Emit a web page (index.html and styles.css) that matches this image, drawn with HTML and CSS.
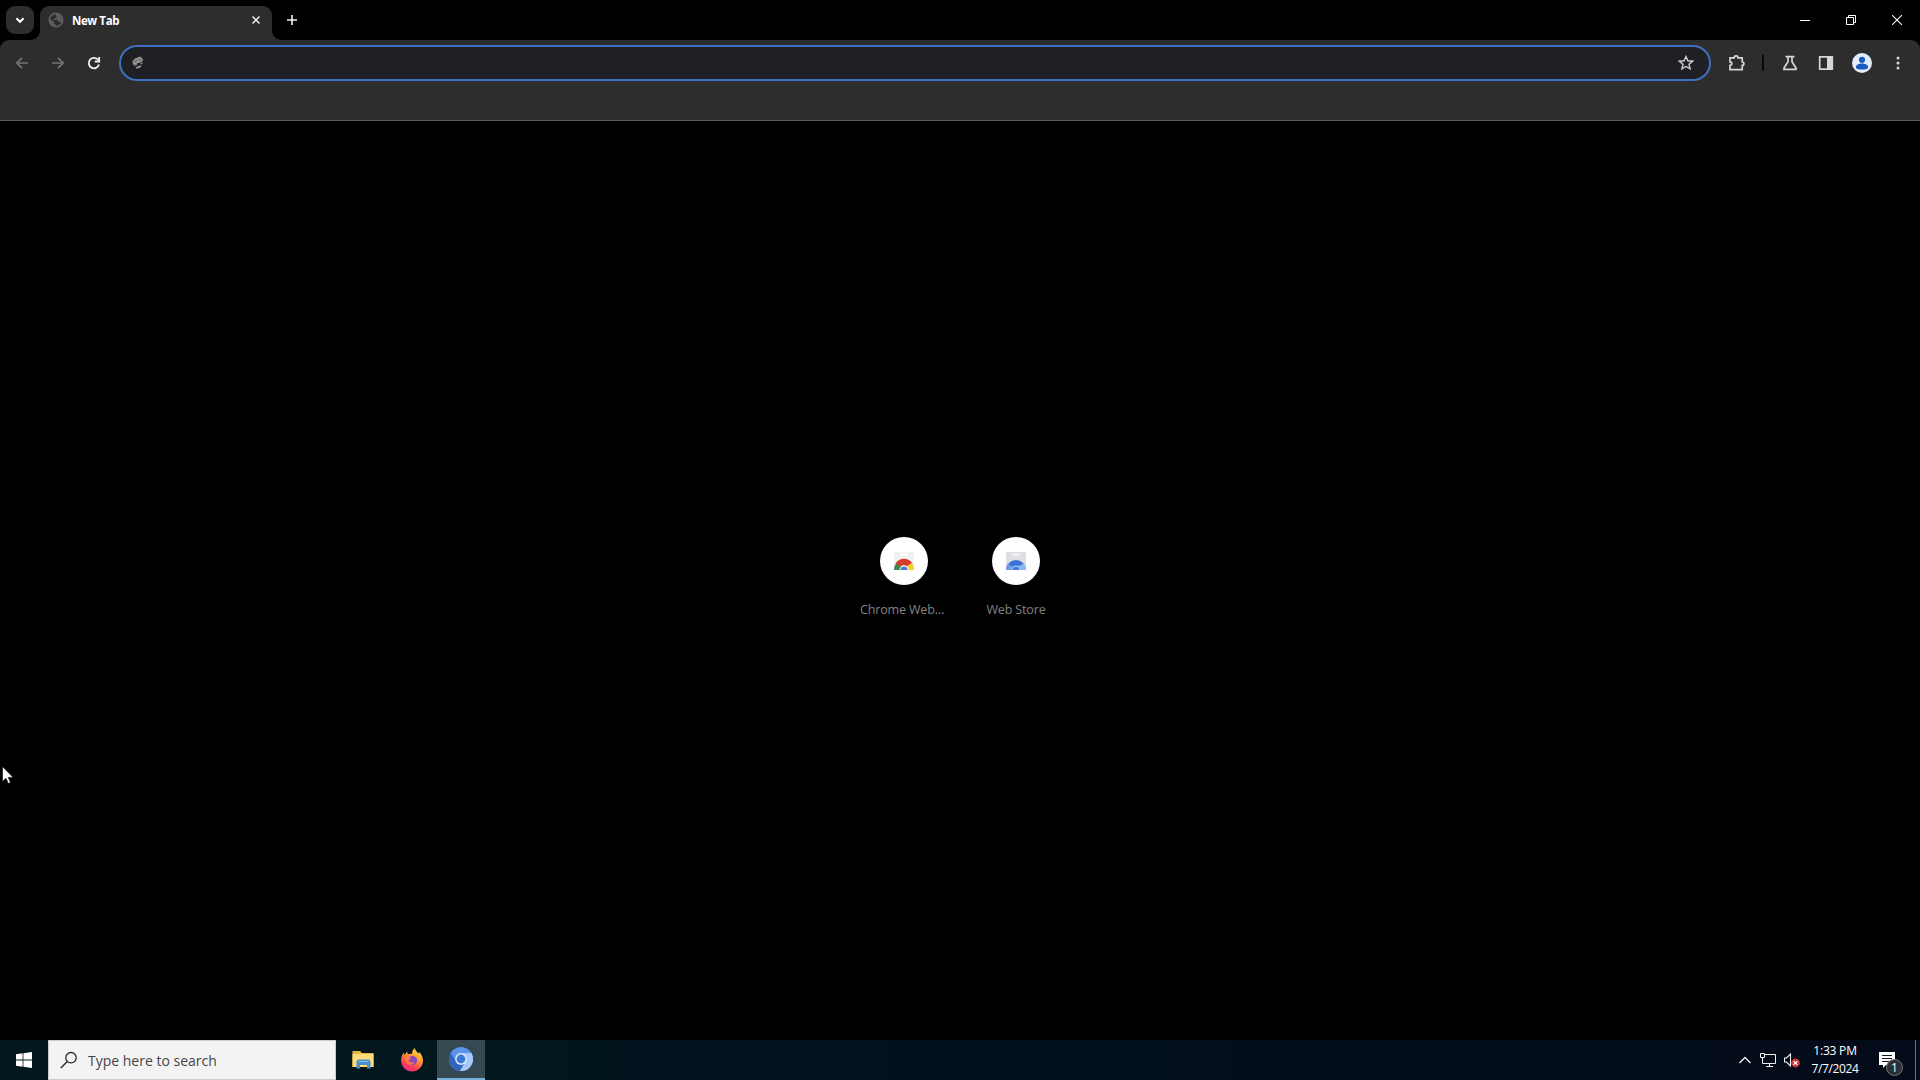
FILE: index.html
```html
<!DOCTYPE html>
<html lang="en">
<head>
  <meta charset="UTF-8" />
  <title>New Tab</title>
  <link rel="stylesheet" href="styles.css">
</head>
<body>
  <header class="tabstrip">
    <button class="tab-search" aria-label="Search tabs">
      <svg width="12" height="12" viewBox="0 0 12 12"><path d="M2.4 4.2 6 7.8l3.6-3.6" fill="none" stroke="#fff" stroke-width="2"/></svg>
    </button>
    <div class="tab">
      <svg class="globe" width="16" height="16" viewBox="0 0 16 16">
        <circle cx="8" cy="8" r="6.8" fill="none" stroke="#626262" stroke-width="1.4"/>
        <path d="M1.5 6.5 6 10v1.5l1.700 1V15C4 15 1 12 1.500 6.500zM8.500 1.500 7.500 4l1.500 1.500-2.500 1-1 1.500h4l1.500 2 2.500.5C15.500 6 13 1.500 8.500 1.500z" fill="#5c5c5c"/>
      </svg>
      <span class="tab-title">New Tab</span>
      <button class="tab-close" aria-label="Close tab">
        <svg width="10" height="10" viewBox="0 0 10 10"><path d="M1.5 1.5l7 7M8.5 1.5l-7 7" stroke="#f2f2f2" stroke-width="1.5"/></svg>
      </button>
    </div>
    <button class="new-tab" aria-label="New tab">
      <svg width="12" height="12" viewBox="0 0 12 12"><path d="M6 1v10M1 6h10" stroke="#f2f2f2" stroke-width="1.6"/></svg>
    </button>
    <div class="window-controls">
      <button aria-label="Minimize"><svg width="10" height="10" viewBox="0 0 10 10"><path d="M0 5.5h10" stroke="#fff"/></svg></button>
      <button aria-label="Restore"><svg width="10" height="10" viewBox="0 0 10 10"><path d="M.5 2.5h7v7h-7zM2.5 2.5v-2h7v7h-2" fill="none" stroke="#fff"/></svg></button>
      <button aria-label="Close"><svg width="10" height="10" viewBox="0 0 10 10"><path d="M0 0l10 10M10 0L0 10" stroke="#fff" stroke-width="1.1"/></svg></button>
    </div>
  </header>

  <nav class="toolbar">
    <div class="toolbar-row">
      <button class="tool dim" aria-label="Back">
        <svg width="16" height="16" viewBox="0 0 16 16"><path d="M14 8H3M8 2.8 2.8 8 8 13.2"/></svg>
      </button>
      <button class="tool dim" aria-label="Forward">
        <svg width="16" height="16" viewBox="0 0 16 16"><path d="M2 8h11M8 2.8 13.2 8 8 13.2"/></svg>
      </button>
      <button class="tool bright" aria-label="Reload">
        <svg width="16" height="16" viewBox="0 0 16 16"><path d="M13 9.5A5.2 5.2 0 1 1 12.2 5"/><path d="M13.2 2v4.5H8.8"/></svg>
      </button>
      <div class="omnibox">
        <svg class="site-icon" width="16" height="16" viewBox="0 0 16 16">
          <path d="M2.5 6 5 3.5l5-2 2.500 2 .5 2.500-3 1.500-4 1.500-3 1z" fill="#96948e"/>
          <path d="M4.500 6.500l3-1.200M9 4.500l2 .5" stroke="#4c4c50"/>
          <path d="M4 10.200l3-1M10.500 8.700l2-.7" stroke="#84827c" stroke-width="1.500"/>
          <path d="M6 13l5-1.800" stroke="#a09e98" stroke-width="1.800"/>
        </svg>
        <svg class="star" width="16" height="16" viewBox="0 0 16 16"><path d="M8 1.5l1.9 4.3 4.7.4-3.6 3.1 1.1 4.6L8 11.5l-4.100 2.400L5 9.300 1.400 6.200l4.700-.4z" fill="none" stroke="#d0d0d4" stroke-width="1.4"/></svg>
      </div>
      <button class="tool extensions" aria-label="Extensions">
        <svg width="18" height="18" viewBox="0 0 18 18"><path d="M2 3.8h4.2a1.9 1.9 0 0 1 3.8 0h4.2V8a1.7 1.7 0 0 1 0 3.4v4.2H2v-4.2a1.8 1.8 0 0 0 0-3.6z"/></svg>
      </button>
      <span class="divider"></span>
      <button class="tool" aria-label="Experiments">
        <svg width="16" height="16" viewBox="0 0 16 16"><path d="M3.5 1.7h9M6 1.7v5L2 13v1.3h12V13L10 6.7v-5"/></svg>
      </button>
      <button class="tool" aria-label="Side panel">
        <svg width="16" height="16" viewBox="0 0 16 16"><path d="M1.7 1.8h12.6v12.4H1.7z"/><path d="M9 1.5h5.5v13H9z" fill="#d6d6d6" stroke="none"/></svg>
      </button>
      <button class="tool" aria-label="Profile">
        <svg width="20" height="20" viewBox="0 0 20 20"><g stroke="none"><circle cx="10" cy="10" r="10" fill="#e2ecfb"/><circle cx="10" cy="6.8" r="3.1" fill="#1a5cc4"/><path d="M4 15v-1.2c0-2.3 3.5-3.3 6-3.3s6 1 6 3.3V15c-1 1-3 1.6-6 1.6S5 16 4 15z" fill="#1a5cc4"/></g></svg>
      </button>
      <button class="tool" aria-label="Menu">
        <svg width="16" height="16" viewBox="0 0 16 16"><g fill="#d6d6d6" stroke="none"><circle cx="8" cy="2.9" r="1.5"/><circle cx="8" cy="8" r="1.5"/><circle cx="8" cy="13.1" r="1.5"/></g></svg>
      </button>
    </div>
  </nav>

  <main>
    <a class="shortcut">
      <span class="shortcut-icon">
        <svg width="20" height="20" viewBox="0 0 20 20">
          <path d="M0 1h20v17H0z" fill="#f1f1f1"/>
          <path d="M6 3.5h8" stroke="#fff" stroke-width="2"/>
          <path d="M0 19a10 10 0 0 1 3-7.5l5 4.5-1 3z" fill="#3c8b48"/>
          <path d="M1.5 12.5a10 10 0 0 1 17 0l-6 3a4 4 0 0 0-5.5 0z" fill="#d83b2d"/>
          <path d="M17.8 12a10 10 0 0 1 2.2 7h-7l-.6-3.5z" fill="#f6cf31"/>
          <path d="M5.5 19a4.5 4.5 0 0 1 9 0z" fill="#fff"/>
          <path d="M6.5 19a3.5 3.5 0 0 1 7 0z" fill="#3d7de0"/>
        </svg>
      </span>
      <span class="shortcut-label truncated">Chrome Web...</span>
    </a>
    <a class="shortcut">
      <span class="shortcut-icon">
        <svg width="20" height="20" viewBox="0 0 20 20">
          <path d="M0 1h20v17.5H0z" fill="#dedfe4"/>
          <path d="M6 3.5h8" stroke="#f5f5f5" stroke-width="2"/>
          <path d="M0 19a10 10 0 0 1 20 0z" fill="#3f73d1"/>
          <path d="M0 19a10 10 0 0 1 2-6.5L7 16l-1 3z" fill="#6f9ae6"/>
          <path d="M18 12.5a10 10 0 0 1 2 6.5h-7l-1-3.5z" fill="#8db8f5"/>
          <path d="M5.5 19a4.5 4.5 0 0 1 9 0z" fill="#a9c9f5"/>
          <path d="M6.7 19a3.3 3.3 0 0 1 6.6 0z" fill="#3c7bde"/>
        </svg>
      </span>
      <span class="shortcut-label">Web Store</span>
    </a>
  </main>

  <footer class="taskbar">
    <button class="start" aria-label="Start">
      <svg width="16" height="16" viewBox="0 0 16 16"><path d="M0 2.2l6.6-.9v6.2H0zM7.4 1.2 16 0v7.5H7.4zM0 8.4h6.6v6.3L0 13.8zM7.4 8.4H16V16l-8.6-1.2z" fill="#fff"/></svg>
    </button>
    <div class="search">
      <svg width="18" height="18" viewBox="0 0 18 18"><circle cx="11" cy="6.7" r="5.2" fill="none" stroke="#2a2a2a" stroke-width="1.3"/><path d="M7.3 10.5.8 17" stroke="#2a2a2a" stroke-width="1.4"/></svg>
      <span>Type here to search</span>
    </div>
    <div class="apps">
      <button class="app" aria-label="File Explorer">
        <svg width="24" height="24" viewBox="0 0 24 24">
          <path d="M1.5 3H9l2 2h11.5v14h-21z" fill="#e8b53f"/>
          <path d="M1.5 6h21v13h-21z" fill="#fbdc77"/>
          <path d="M5.5 20.5V13L7 11.5h11l1.5 1.5v7.5H16V17H9v3.5z" fill="#4a90cf"/>
          <path d="M7.5 13.5h10" stroke="#86bce8"/>
        </svg>
      </button>
      <button class="app" aria-label="Firefox">
        <svg width="24" height="24" viewBox="0 0 24 24">
          <defs>
            <linearGradient id="fox" x1=".8" y1="0" x2=".3" y2="1"><stop offset="0" stop-color="#ffe346"/><stop offset=".4" stop-color="#ff9a30"/><stop offset=".75" stop-color="#fb4054"/><stop offset="1" stop-color="#e3308b"/></linearGradient>
          </defs>
          <path d="M1 13c0-3.5 1-6.3 2.8-8.5L4.5 7 7 3.5 8 6.2c1-.5 2.5-.7 4-.2 0-2.500.9-4.500 2.800-6 .5 2.700 2 3.800 3.700 5.500l.7-1.500c2.500 2.500 3.800 5.500 3.800 8.800A11 11 0 0 1 12 23.500 11 11 0 0 1 1 13z" fill="url(#fox)"/>
          <circle cx="12.500" cy="12.500" r="4.600" fill="#8a48c4"/>
          <path d="M5 10c3-1.500 5-.8 6.500.8-1.800.2-2.800 1-3 2 1.500 2.300 4 2.500 6 1-.5 3-5.500 4.200-8.500.7z" fill="#ff7b37"/>
        </svg>
      </button>
      <button class="app active" aria-label="Chromium">
        <svg width="24" height="24" viewBox="0 0 24 24">
          <circle cx="12" cy="12" r="12" fill="#5b92ea"/>
          <path d="M1.6 6A12 12 0 0 0 11 24l5.500-9.500L7 14.500z" fill="#2f66bd"/>
          <path d="M12 6h10.400A12 12 0 0 1 11 24l6-10.500z" fill="#a8c8fa"/>
          <circle cx="12" cy="12" r="5.900" fill="#dbe8fc"/>
          <circle cx="12" cy="12" r="4.400" fill="#3a78d8"/>
        </svg>
      </button>
    </div>
    <div class="tray">
      <svg class="tray-icon" width="14" height="10" viewBox="0 0 14 10"><path d="M1.5 8 7 2.500 12.500 8" fill="none" stroke="#f2f2f2" stroke-width="1.4"/></svg>
      <svg class="tray-icon" width="16" height="16" viewBox="0 0 16 16"><path d="M4.5 2.5h11v9h-13v-6M9.5 11.5v3M6 14.500h7M.5 1.500h4v4h-4z" fill="none" stroke="#f2f2f2"/></svg>
      <svg class="tray-icon" width="16" height="16" viewBox="0 0 16 16"><path d="M.5 6h2L6.500 2v12l-4-4h-2z" fill="none" stroke="#f2f2f2" stroke-width="1.1"/><circle cx="11.500" cy="11" r="4.400" fill="#c93a3e"/><path d="M9.600 9.100l3.800 3.800M13.400 9.100l-3.800 3.800" stroke="#fff" stroke-width="1.2"/></svg>
      <div class="clock">
        <span>1:33 PM</span>
        <span class="date">7/7/2024</span>
      </div>
      <button class="notifications" aria-label="Notifications">
        <svg width="16" height="16" viewBox="0 0 16 16"><path d="M0 0h16v13H7l-3 3v-3H0z" fill="#fff"/><path d="M3 3.500h10M3 6.500h10M3 9.500h7" stroke="#101720"/></svg>
        <span class="badge">1</span>
      </button>
      <span class="show-desktop"></span>
    </div>
  </footer>

  <svg class="cursor" width="12" height="19" viewBox="0 0 12 19"><path d="M.5.5v15l3.500-3.300 2.300 5.300 2.200-1-2.200-5.100h4.800z" fill="#fff" stroke="#000" stroke-width=".6"/></svg>
</body>
</html>
```
FILE: styles.css
```css
* {
  box-sizing: border-box;
}

body {
  display: flex;
  flex-direction: column;
  height: 100vh;
  margin: 0;
  overflow: hidden;
  background: #000;
  color: #fff;
  font-family: "Open Sans", "Noto Sans", sans-serif;
  font-size: 12px;
}

button {
  display: flex;
  align-items: center;
  justify-content: center;
  padding: 0;
  border: none;
  background: none;
  color: inherit;
  font: inherit;
}

svg {
  display: block;
  flex: none;
}

/* tab strip */
.tabstrip {
  display: flex;
  height: 40px;
  padding: 6px 0 0 6px;
}

.tab-search {
  width: 28px;
  height: 28px;
  border-radius: 9px;
  background: #2d2d2d;
}

.tab {
  position: relative;
  display: flex;
  align-items: center;
  width: 232px;
  height: 34px;
  margin-left: 6px;
  padding: 0 10px 6px 8px;
  border-radius: 9px 9px 0 0;
  background: #2d2d2d;
}

/* curved feet where the tab meets the toolbar */
.tab::before,
.tab::after {
  content: "";
  position: absolute;
  bottom: 0;
  width: 9px;
  height: 9px;
}

.tab::before {
  right: 100%;
  background: radial-gradient(circle at 0 0, transparent 8.5px, #2d2d2d 9px);
}

.tab::after {
  left: 100%;
  background: radial-gradient(circle at 100% 0, transparent 8.5px, #2d2d2d 9px);
}

.tab-title {
  flex: 1;
  margin-left: 8px;
  padding-top: 1px;
  font-size: 11.5px;
  font-weight: bold;
  letter-spacing: -0.4px;
}

.tab-close {
  width: 12px;
  height: 16px;
}

.new-tab {
  width: 28px;
  height: 28px;
  margin-left: 6px;
}

.window-controls {
  display: flex;
  height: 28px;
  margin-left: auto;
}

.window-controls button {
  width: 46px;
}

/* toolbar */
.toolbar {
  height: 81px;
  border-bottom: 1px solid #5a5a5a;
  border-radius: 9px 9px 0 0;
  background: #2d2d2d;
}

.toolbar-row {
  display: flex;
  align-items: center;
  height: 46px;
  padding: 0 4px;
}

.tool {
  width: 36px;
  height: 36px;
  fill: none;
  stroke: #d6d6d6;
  stroke-width: 1.7;
}

.tool.dim {
  stroke: #747474;
}

.tool.bright {
  stroke: #f2f2f2;
  stroke-width: 1.8;
}

.tool.extensions {
  padding-left: 2px;
}

.omnibox {
  display: flex;
  flex: 1;
  align-items: center;
  justify-content: space-between;
  height: 36px;
  margin: 0 7px;
  padding: 0 15px 0 9px;
  border: 2px solid #3e6fc1;
  border-radius: 18px;
  background: #1f2024;
}

.divider {
  width: 2px;
  height: 16px;
  margin: 0 8px;
  background: #080808;
}

/* new tab page */
main {
  display: flex;
  flex: 1;
  justify-content: center;
  padding-top: 400px;
}

.shortcut {
  display: flex;
  flex-direction: column;
  align-items: center;
  width: 112px;
  padding-top: 16px;
}

.shortcut-icon {
  display: flex;
  align-items: center;
  justify-content: center;
  width: 48px;
  height: 48px;
  border-radius: 50%;
  background: #fff;
}

.shortcut-label {
  width: 88px;
  margin-top: 16px;
  color: #828282;
  font-size: 12.5px;
  letter-spacing: -0.15px;
  line-height: 18px;
  text-align: center;
  white-space: nowrap;
}

.shortcut-label.truncated {
  text-align: left;
}

/* taskbar */
.taskbar {
  display: flex;
  height: 40px;
  background: linear-gradient(90deg, #02181d 0%, #02151e 35%, #020e1c 65%, #040b19 100%);
}

.start {
  width: 48px;
}

.search {
  display: flex;
  align-items: center;
  width: 288px;
  padding-left: 11px;
  border: 1px solid #ccc;
  background: #f3f3f3;
  color: #454545;
  font-size: 14px;
}

.search span {
  margin-left: 10px;
  padding-top: 1px;
}

.apps {
  display: flex;
  gap: 1px;
  margin-left: 3px;
}

.app {
  width: 48px;
}

.app.active {
  border-bottom: 2px solid #76b0de;
  background: #354953;
}

.tray {
  display: flex;
  align-items: center;
  margin-left: auto;
}

.tray-icon {
  margin-right: 8px;
}

.clock {
  display: flex;
  flex-direction: column;
  align-items: center;
  width: 54px;
  margin: 0 7px 0 0;
  letter-spacing: -0.2px;
  line-height: 18px;
}

.date {
  letter-spacing: -0.4px;
}

.notifications {
  position: relative;
  width: 46px;
  height: 40px;
  padding-right: 10px;
}

.badge {
  position: absolute;
  top: 19px;
  left: 17px;
  width: 17px;
  height: 17px;
  border: 1px solid #777;
  border-radius: 50%;
  background: #2b3037;
  font-size: 12px;
  line-height: 15px;
  text-align: center;
}

.show-desktop {
  width: 5px;
  height: 40px;
  border-left: 1px solid #6d737c;
}

/* mouse pointer */
.cursor {
  position: absolute;
  top: 766px;
  left: 2px;
}
```
